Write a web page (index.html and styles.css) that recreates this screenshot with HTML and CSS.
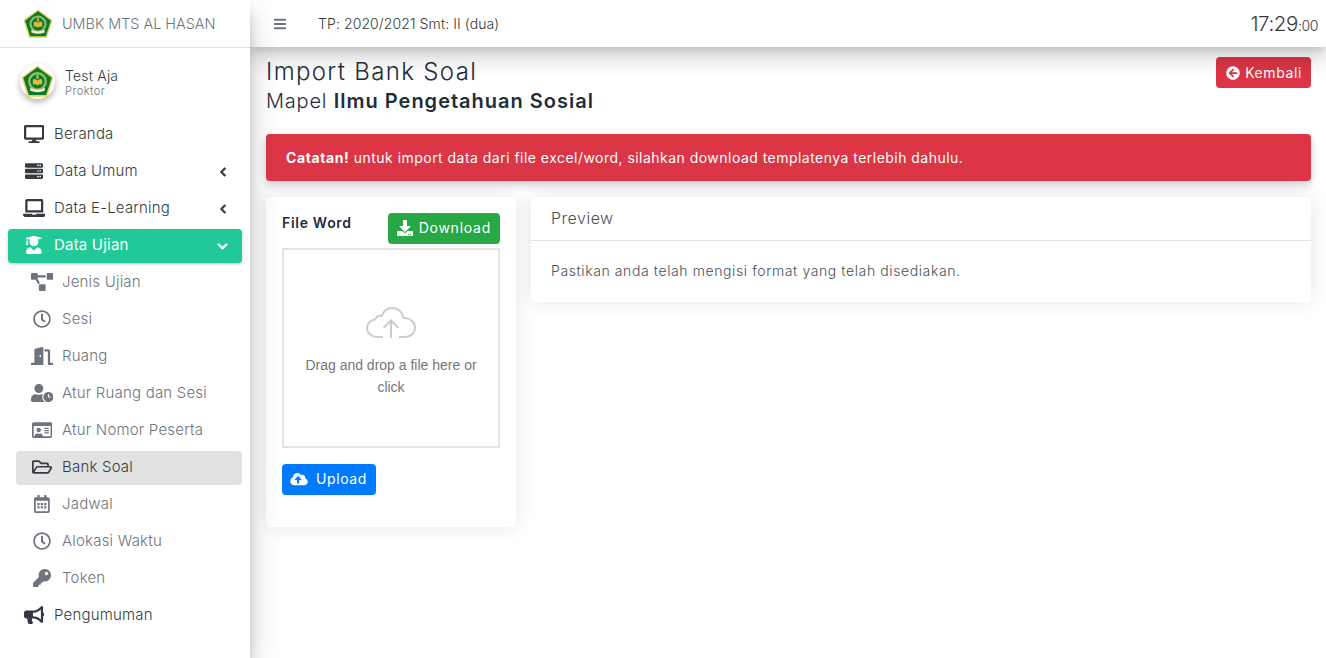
FILE: index.html
```html
<!DOCTYPE html>
<html>
<head>
  <meta charset="utf-8">
  <meta name="viewport" content="width=device-width">
  <title>Import Bank Soal</title>
  <link rel="stylesheet" href="styles.css">
</head>
<body>
  <svg class="defs" width="0" height="0">
    <symbol id="logo" viewBox="0 0 100 100">
      <path d="M50 2L98 37L80 96H20L2 37Z" fill="#e6d35a"/>
      <path d="M50 7L93 39L76 91H24L7 39Z" fill="#0b7a2e"/>
      <circle cx="50" cy="50" r="25" fill="none" stroke="#8fbf6a" stroke-width="7"/>
      <path d="M36 44q8-5 14 3q6-8 14-3v15q-8-3-14 3q-6-6-14-3z" fill="#e2b93b"/>
      <path d="M47 30h6v12h-6z" fill="#e2b93b"/>
      <path d="M28 69q22 12 44 0v9q-22 9-44 0z" fill="#f1eecb"/>
    </symbol>
  </svg>

  <aside class="sidebar">
    <div class="brand">
      <svg class="brand-logo"><use href="#logo"/></svg>
      <span class="brand-text">UMBK MTS AL HASAN</span>
    </div>
    <div class="user-panel">
      <div class="avatar"><svg class="avatar-logo"><use href="#logo"/></svg></div>
      <div class="user-info">
        <div class="user-name">Test Aja</div>
        <div class="user-role">Proktor</div>
      </div>
    </div>
    <nav class="menu">
      <a class="menu-item">
        <span class="icon-box"><svg class="icon" viewBox="0 0 576 512"><path d="M528 0H48C21.5 0 0 21.5 0 48v320c0 26.5 21.5 48 48 48h192l-16 48h-72c-13.3 0-24 10.7-24 24s10.7 24 24 24h272c13.3 0 24-10.7 24-24s-10.7-24-24-24h-72l-16-48h192c26.5 0 48-21.5 48-48V48c0-26.5-21.5-48-48-48zm-16 352H64V64h448v288z"/></svg></span>
        Beranda
      </a>
      <a class="menu-item">
        <span class="icon-box"><svg class="icon" viewBox="0 0 512 512"><path d="M480 160H32c-17.7 0-32-14.3-32-32V64c0-17.7 14.3-32 32-32h448c17.7 0 32 14.3 32 32v64c0 17.7-14.3 32-32 32zm-48-88c-13.3 0-24 10.7-24 24s10.7 24 24 24 24-10.7 24-24-10.7-24-24-24zm-64 0c-13.3 0-24 10.7-24 24s10.7 24 24 24 24-10.7 24-24-10.7-24-24-24zm112 248H32c-17.7 0-32-14.3-32-32v-64c0-17.7 14.3-32 32-32h448c17.7 0 32 14.3 32 32v64c0 17.7-14.3 32-32 32zm-48-88c-13.3 0-24 10.7-24 24s10.7 24 24 24 24-10.7 24-24-10.7-24-24-24zm-64 0c-13.3 0-24 10.7-24 24s10.7 24 24 24 24-10.7 24-24-10.7-24-24-24zm112 248H32c-17.7 0-32-14.3-32-32v-64c0-17.7 14.3-32 32-32h448c17.7 0 32 14.3 32 32v64c0 17.7-14.3 32-32 32zm-48-88c-13.3 0-24 10.7-24 24s10.7 24 24 24 24-10.7 24-24-10.7-24-24-24zm-64 0c-13.3 0-24 10.7-24 24s10.7 24 24 24 24-10.7 24-24-10.7-24-24-24z"/></svg></span>
        Data Umum
        <svg class="arrow" viewBox="0 0 320 512"><path d="M34.52 239.03L228.87 44.69c9.37-9.37 24.57-9.37 33.94 0l22.67 22.67c9.36 9.36 9.37 24.52.04 33.9L131.49 256l154.02 154.75c9.34 9.38 9.32 24.54-.04 33.9l-22.67 22.67c-9.37 9.37-24.57 9.37-33.94 0L34.52 272.97c-9.37-9.37-9.37-24.57 0-33.94z"/></svg>
      </a>
      <a class="menu-item">
        <span class="icon-box"><svg class="icon" viewBox="0 0 640 512"><path d="M624 416H381.54c-.74 19.81-14.71 32-32.74 32H288c-18.69 0-33.02-17.47-32.77-32H16c-8.8 0-16 7.2-16 16v16c0 35.2 28.8 64 64 64h512c35.2 0 64-28.8 64-64v-16c0-8.8-7.2-16-16-16zM576 48c0-26.4-21.6-48-48-48H112C85.6 0 64 21.6 64 48v336h512V48zm-64 272H128V64h384v256z"/></svg></span>
        Data E-Learning
        <svg class="arrow" viewBox="0 0 320 512"><path d="M34.52 239.03L228.87 44.69c9.37-9.37 24.57-9.37 33.94 0l22.67 22.67c9.36 9.36 9.37 24.52.04 33.9L131.49 256l154.02 154.75c9.34 9.38 9.32 24.54-.04 33.9l-22.67 22.67c-9.37 9.37-24.57 9.37-33.94 0L34.52 272.97c-9.37-9.37-9.37-24.57 0-33.94z"/></svg>
      </a>
      <a class="menu-item active">
        <span class="icon-box"><svg class="icon" viewBox="0 0 448 512"><path d="M319.4 320.6L224 416l-95.4-95.4C57.1 323.7 0 382.2 0 454.4v9.6c0 26.5 21.5 48 48 48h352c26.5 0 48-21.5 48-48v-9.6c0-72.2-57.1-130.7-128.6-133.8zM13.6 79.8l6.4 1.5v58.4c-7 4.2-12 11.5-12 20.3 0 8.4 4.6 15.4 11.1 19.7L3.5 242c-1.7 6.9 2.1 14 7.6 14h41.8c5.5 0 9.3-7.1 7.6-14l-15.6-62.3C51.4 175.4 56 168.4 56 160c0-8.8-5-16.1-12-20.3V87.1l66 15.9c-8.6 17.2-14 36.4-14 57 0 70.7 57.3 128 128 128s128-57.3 128-128c0-20.6-5.3-39.8-14-57l96.3-23.2c18.2-4.4 18.2-27.1 0-31.5l-190.4-46c-13-3.1-26.7-3.1-39.7 0L13.6 48.2c-18.1 4.4-18.1 27.2 0 31.6z"/></svg></span>
        Data Ujian
        <svg class="arrow arrow-down" viewBox="0 0 448 512"><path d="M207.029 381.476L12.686 187.132c-9.373-9.373-9.373-24.569 0-33.941l22.667-22.667c9.357-9.357 24.522-9.375 33.901-.04L224 284.505l154.745-154.021c9.379-9.335 24.544-9.317 33.901.04l22.667 22.667c9.373 9.373 9.373 24.569 0 33.941L240.971 381.476c-9.373 9.372-24.569 9.372-33.942 0z"/></svg>
      </a>
      <a class="menu-item sub">
        <span class="icon-box"><svg class="icon" viewBox="0 0 640 512"><path d="M384 320H256c-17.67 0-32 14.33-32 32v128c0 17.67 14.33 32 32 32h128c17.67 0 32-14.33 32-32V352c0-17.67-14.33-32-32-32zM192 32c0-17.67-14.33-32-32-32H32C14.33 0 0 14.33 0 32v128c0 17.67 14.33 32 32 32h95.72l73.16 128.04C211.98 300.98 232.4 288 256 288h.28L192 175.51V128h224V64H192V32zM608 0H480c-17.67 0-32 14.33-32 32v128c0 17.67 14.33 32 32 32h128c17.67 0 32-14.33 32-32V32c0-17.67-14.33-32-32-32z"/></svg></span>
        Jenis Ujian
      </a>
      <a class="menu-item sub">
        <span class="icon-box"><svg class="icon" viewBox="0 0 512 512"><path d="M256 8C119 8 8 119 8 256s111 248 248 248 248-111 248-248S393 8 256 8zm0 448c-110.5 0-200-89.5-200-200S145.5 56 256 56s200 89.5 200 200-89.5 200-200 200zm61.8-104.4l-84.9-61.7c-3.1-2.3-4.9-5.9-4.9-9.7V116c0-6.6 5.4-12 12-12h32c6.6 0 12 5.4 12 12v141.7l66.8 48.6c5.4 3.9 6.5 11.4 2.6 16.8L334.6 349c-3.9 5.3-11.4 6.5-16.8 2.6z"/></svg></span>
        Sesi
      </a>
      <a class="menu-item sub">
        <span class="icon-box"><svg class="icon" viewBox="0 0 640 512"><path d="M624 448h-80V113.45C544 86.19 522.47 64 496 64H384v64h96v384h144c8.84 0 16-7.16 16-16v-32c0-8.84-7.16-16-16-16zM312.24 1.01l-192 49.74C105.99 54.44 96 67.7 96 82.92V448H16c-8.84 0-16 7.16-16 16v32c0 8.84 7.16 16 16 16h336V33.18c0-21.58-19.56-37.41-39.76-32.17zM264 288c-13.25 0-24-14.33-24-32s10.75-32 24-32 24 14.33 24 32-10.75 32-24 32z"/></svg></span>
        Ruang
      </a>
      <a class="menu-item sub">
        <span class="icon-box"><svg class="icon" viewBox="0 0 640 512"><path d="M496 224c-79.6 0-144 64.4-144 144s64.4 144 144 144 144-64.4 144-144-64.4-144-144-144zm64 150.3c0 5.3-4.4 9.7-9.7 9.7h-60.6c-5.3 0-9.7-4.4-9.7-9.7v-76.6c0-5.3 4.4-9.7 9.7-9.7h12.6c5.3 0 9.7 4.4 9.7 9.7V352h38.3c5.3 0 9.7 4.4 9.7 9.7v12.6zM320 368c0-27.8 6.7-54.1 18.2-77.5-8-1.5-16.2-2.5-24.6-2.5h-16.7c-22.2 10.2-46.9 16-72.9 16s-50.6-5.8-72.9-16h-16.7C60.2 288 0 348.2 0 422.4V464c0 26.5 21.5 48 48 48h347.1c-45.3-31.9-75.1-84.5-75.1-144zm-96-112c70.7 0 128-57.3 128-128S294.7 0 224 0 96 57.3 96 128s57.3 128 128 128z"/></svg></span>
        Atur Ruang dan Sesi
      </a>
      <a class="menu-item sub">
        <span class="icon-box"><svg class="icon" viewBox="0 0 576 512"><path d="M528 32H48C21.5 32 0 53.5 0 80v352c0 26.5 21.5 48 48 48h480c26.5 0 48-21.5 48-48V80c0-26.5-21.5-48-48-48zm0 400H303.2c.9-4.5.8 3.6.8-22.4 0-31.8-30.1-57.6-67.2-57.6-10.8 0-18.7 8-44.8 8-26.9 0-33.4-8-44.8-8-37.1 0-67.2 25.8-67.2 57.6 0 26-.2 17.9.8 22.4H48V144h480v288zm-168-80h112c4.4 0 8-3.6 8-8v-16c0-4.4-3.6-8-8-8H360c-4.4 0-8 3.6-8 8v16c0 4.4 3.6 8 8 8zm0-64h112c4.4 0 8-3.6 8-8v-16c0-4.4-3.6-8-8-8H360c-4.4 0-8 3.6-8 8v16c0 4.4 3.6 8 8 8zm0-64h112c4.4 0 8-3.6 8-8v-16c0-4.4-3.6-8-8-8H360c-4.4 0-8 3.6-8 8v16c0 4.4 3.6 8 8 8zm-168 96c35.3 0 64-28.7 64-64s-28.7-64-64-64-64 28.7-64 64 28.7 64 64 64z"/></svg></span>
        Atur Nomor Peserta
      </a>
      <a class="menu-item sub current">
        <span class="icon-box"><svg class="icon" viewBox="0 0 576 512"><path d="M527.9 224H480v-48c0-26.5-21.5-48-48-48H272l-64-64H48C21.5 64 0 85.5 0 112v288c0 26.5 21.5 48 48 48h400c16.5 0 31.9-8.5 40.7-22.6l79.9-128c20-31.9-3-73.4-40.7-73.4zM48 118c0-3.3 2.7-6 6-6h134.1l64 64H426c3.3 0 6 2.7 6 6v42H152c-16.8 0-32.4 8.8-41.1 23.2L48 351.4zm400 282H72l77.2-128H528z"/></svg></span>
        Bank Soal
      </a>
      <a class="menu-item sub">
        <span class="icon-box"><svg class="icon" viewBox="0 0 448 512"><path d="M148 288h-40c-6.6 0-12-5.4-12-12v-40c0-6.6 5.4-12 12-12h40c6.6 0 12 5.4 12 12v40c0 6.6-5.4 12-12 12zm108-12v-40c0-6.6-5.4-12-12-12h-40c-6.6 0-12 5.4-12 12v40c0 6.6 5.4 12 12 12h40c6.6 0 12-5.4 12-12zm96 0v-40c0-6.6-5.4-12-12-12h-40c-6.6 0-12 5.4-12 12v40c0 6.6 5.4 12 12 12h40c6.6 0 12-5.4 12-12zm-96 96v-40c0-6.6-5.4-12-12-12h-40c-6.6 0-12 5.4-12 12v40c0 6.6 5.4 12 12 12h40c6.6 0 12-5.4 12-12zm-96 0v-40c0-6.6-5.4-12-12-12h-40c-6.6 0-12 5.4-12 12v40c0 6.6 5.4 12 12 12h40c6.6 0 12-5.4 12-12zm192 0v-40c0-6.6-5.4-12-12-12h-40c-6.6 0-12 5.4-12 12v40c0 6.6 5.4 12 12 12h40c6.6 0 12-5.4 12-12zm96-260v352c0 26.5-21.5 48-48 48H48c-26.5 0-48-21.5-48-48V112c0-26.5 21.5-48 48-48h48V12c0-6.6 5.4-12 12-12h40c6.6 0 12 5.4 12 12v52h128V12c0-6.6 5.4-12 12-12h40c6.6 0 12 5.4 12 12v52h48c26.5 0 48 21.5 48 48zm-48 346V160H48v298c0 3.3 2.7 6 6 6h340c3.3 0 6-2.7 6-6z"/></svg></span>
        Jadwal
      </a>
      <a class="menu-item sub">
        <span class="icon-box"><svg class="icon" viewBox="0 0 512 512"><path d="M256 8C119 8 8 119 8 256s111 248 248 248 248-111 248-248S393 8 256 8zm0 448c-110.5 0-200-89.5-200-200S145.5 56 256 56s200 89.5 200 200-89.5 200-200 200zm61.8-104.4l-84.9-61.7c-3.1-2.3-4.9-5.9-4.9-9.7V116c0-6.6 5.4-12 12-12h32c6.6 0 12 5.4 12 12v141.7l66.8 48.6c5.4 3.9 6.5 11.4 2.6 16.8L334.6 349c-3.9 5.3-11.4 6.5-16.8 2.6z"/></svg></span>
        Alokasi Waktu
      </a>
      <a class="menu-item sub">
        <span class="icon-box"><svg class="icon" viewBox="0 0 512 512"><path d="M512 176c0 97.2-78.8 176-176 176-11.2 0-22.2-1.1-32.8-3.1l-24 27A24 24 0 0 1 261.2 384H224v40c0 13.3-10.7 24-24 24h-40v40c0 13.3-10.7 24-24 24H24c-13.3 0-24-10.7-24-24v-78.1c0-6.4 2.5-12.5 7-17l161.8-161.8C163.1 213.8 160 195.3 160 176 160 78.8 238.8 0 336 0c97.5 0 176 78.5 176 176zM336 128c0 26.5 21.5 48 48 48s48-21.5 48-48-21.5-48-48-48-48 21.5-48 48z"/></svg></span>
        Token
      </a>
      <a class="menu-item">
        <span class="icon-box"><svg class="icon" viewBox="0 0 576 512"><path d="M576 240c0-23.63-12.95-44.04-32-55.12V32.01C544 23.26 537.02 0 512 0c-7.12 0-14.19 2.38-19.98 7.02l-85.03 68.03C364.28 109.19 310.66 128 256 128H64c-35.35 0-64 28.65-64 64v96c0 35.35 28.65 64 64 64h33.7c-1.39 10.48-2.18 21.14-2.18 32 0 39.77 9.26 77.35 25.56 110.94 5.19 10.69 16.52 17.06 28.4 17.06h74.28c26.05 0 41.69-29.84 25.9-50.56-16.4-21.52-26.15-48.36-26.15-77.44 0-11.11 1.62-21.79 4.41-32H256c54.66 0 108.28 18.81 150.98 52.95l85.03 68.03a32.023 32.023 0 0 0 19.98 7.02c24.92 0 32-22.78 32-32V295.13C563.05 284.04 576 263.63 576 240zm-96 141.42l-33.05-26.44C392.95 311.78 325.12 288 256 288v-96c69.12 0 136.95-23.78 190.95-66.98L480 98.58v282.84z"/></svg></span>
        Pengumuman
      </a>
    </nav>
  </aside>

  <div class="page">
    <header class="topbar">
      <svg class="bars" viewBox="0 0 448 512"><path d="M16 132h416c8.8 0 16-7.2 16-16V76c0-8.8-7.2-16-16-16H16C7.2 60 0 67.2 0 76v40c0 8.8 7.2 16 16 16zm0 160h416c8.8 0 16-7.2 16-16v-40c0-8.8-7.2-16-16-16H16c-8.8 0-16 7.2-16 16v40c0 8.8 7.2 16 16 16zm0 160h416c8.8 0 16-7.2 16-16v-40c0-8.8-7.2-16-16-16H16c-8.8 0-16 7.2-16 16v40c0 8.8 7.2 16 16 16z"/></svg>
      <span class="period">TP: 2020/2021 Smt: II (dua)</span>
      <span class="clock">17:29<small>:00</small></span>
    </header>

    <main class="content">
      <div class="title-row">
        <div>
          <h1 class="title">Import Bank Soal</h1>
          <h2 class="subtitle">Mapel <b>Ilmu Pengetahuan Sosial</b></h2>
        </div>
        <a class="btn btn-red">
          <svg class="btn-icon" viewBox="0 0 512 512"><path d="M256 504C119 504 8 393 8 256S119 8 256 8s248 111 248 248-111 248-248 248zm28.9-143.6L209.4 288H392c13.3 0 24-10.7 24-24v-16c0-13.3-10.7-24-24-24H209.4l75.5-72.4c9.7-9.3 9.9-24.8.4-34.3l-11-10.9c-9.4-9.4-24.6-9.4-33.9 0L107.7 239c-9.4 9.4-9.4 24.6 0 33.9l132.7 132.7c9.4 9.4 24.6 9.4 33.9 0l11-10.9c9.5-9.5 9.3-25-.4-34.3z"/></svg>
          Kembali
        </a>
      </div>

      <div class="alert"><b>Catatan!</b> untuk import data dari file excel/word, silahkan download templatenya terlebih dahulu.</div>

      <div class="cards">
        <section class="card upload-card">
          <div class="upload-head">
            <span class="upload-label">File Word</span>
            <a class="btn btn-green">
              <svg class="btn-icon" viewBox="0 0 512 512"><path d="M216 0h80c13.3 0 24 10.7 24 24v168h87.7c17.8 0 26.7 21.5 14.1 34.1L269.7 378.3c-7.5 7.5-19.8 7.5-27.3 0L90.1 226.1c-12.6-12.6-3.7-34.1 14.1-34.1H192V24c0-13.3 10.7-24 24-24zm296 376v112c0 13.3-10.7 24-24 24H24c-13.3 0-24-10.7-24-24V376c0-13.3 10.7-24 24-24h146.7l49 49c20.1 20.1 52.5 20.1 72.6 0l49-49H488c13.3 0 24 10.7 24 24zm-124 88c0-11-9-20-20-20s-20 9-20 20 9 20 20 20 20-9 20-20zm64 0c0-11-9-20-20-20s-20 9-20 20 9 20 20 20 20-9 20-20z"/></svg>
              Download
            </a>
          </div>
          <div class="dropzone">
            <svg class="cloud" viewBox="0 0 50 32"><path d="M17 30H11C5.5 30 1 26.2 1 21.2C1 16.6 4.6 13 9 12.6C10.4 9.8 13 8.4 15.6 8.8C17.8 4 21.5 1 26 1C32 1 36.6 5.2 37.6 11C43.6 10.6 49 14.8 49 20.6C49 25.8 44.8 30 39.6 30H33" fill="none" stroke="#ccc" stroke-width="2"/><path d="M25 31V14M17.5 21L25 13.5L32.5 21" fill="none" stroke="#ccc" stroke-width="2"/></svg>
            <p class="drop-text">Drag and drop a file here or click</p>
          </div>
          <a class="btn btn-blue">
            <svg class="btn-icon upload-icon" viewBox="0 0 640 512"><path d="M537.6 226.6c4.1-10.7 6.4-22.4 6.4-34.6 0-53-43-96-96-96-19.7 0-38.1 6-53.3 16.2C367 64.2 315.3 32 256 32c-88.4 0-160 71.6-160 160 0 2.7.1 5.4.2 8.1C40.2 219.8 0 273.2 0 336c0 79.5 64.5 144 144 144h368c70.7 0 128-57.3 128-128 0-61.9-44-113.6-102.4-125.4zM393.4 288H328v112c0 8.8-7.2 16-16 16h-48c-8.8 0-16-7.2-16-16V288h-65.4c-14.3 0-21.4-17.2-11.3-27.3l105.4-105.4c6.2-6.2 16.4-6.2 22.6 0l105.4 105.4c10.1 10.1 2.9 27.3-11.3 27.3z"/></svg>
            Upload
          </a>
        </section>

        <section class="card preview-card">
          <div class="preview-head">Preview</div>
          <div class="preview-body">Pastikan anda telah mengisi format yang telah disediakan.</div>
        </section>
      </div>
    </main>
  </div>
</body>
</html>
```

FILE: styles.css
```css
* {
  box-sizing: border-box;
}

html, body {
  height: 100%;
}

body {
  margin: 0;
  display: flex;
  overflow: hidden;
  font-family: Inter, "Noto Sans", "Liberation Sans", sans-serif;
  font-size: 14px;
  font-weight: 300;
  color: #1f2d3d;
  background: #fff;
}

.defs {
  position: absolute;
}

/* sidebar */
.sidebar {
  width: 250px;
  flex: none;
  background: #fff;
  box-shadow: 0 14px 28px rgba(0, 0, 0, 0.2), 0 10px 10px rgba(0, 0, 0, 0.12);
  position: relative;
  z-index: 2;
}

.brand {
  height: 48px;
  padding-left: 23px;
  display: flex;
  align-items: center;
  gap: 9px;
  border-bottom: 1px solid #dee2e6;
}

.brand-logo {
  width: 30px;
  height: 30px;
}

.brand-text {
  font-size: 14.4px;
  color: #6c757d;
}

.user-panel {
  display: flex;
  align-items: center;
  gap: 10px;
  padding-left: 20px;
  height: 66px;
}

.avatar {
  width: 35px;
  height: 35px;
  border-radius: 50%;
  background: #fff;
  box-shadow: 0 3px 6px rgba(0, 0, 0, 0.3);
  display: flex;
  align-items: center;
  justify-content: center;
}

.avatar-logo {
  width: 33px;
  height: 33px;
}

.user-info {
  margin-top: 1px;
}

.user-name {
  font-size: 14px;
  line-height: 18px;
  letter-spacing: 0.2px;
  color: #343a40;
}

.user-role {
  font-size: 11px;
  line-height: 12px;
  letter-spacing: 0.5px;
  color: #6c757d;
}

.menu {
  padding: 4px 8px 0;
  display: flex;
  flex-direction: column;
  gap: 3px;
}

.menu-item {
  height: 34px;
  display: flex;
  align-items: center;
  padding: 0 0 3px 16px;
  border-radius: 4px;
  font-size: 15px;
  letter-spacing: 0.2px;
  color: #343a40;
  fill: #343a40;
}

.menu-item.sub {
  margin-left: 8px;
  color: #6c757d;
  fill: #6c757d;
}

.menu-item.active {
  background: #20c997;
  color: #fff;
  fill: #fff;
  box-shadow: 0 1px 3px rgba(0, 0, 0, 0.24);
  font-weight: 400;
}

.menu-item.current {
  background: #e2e2e2;
  color: #343a40;
  fill: #343a40;
}

.icon-box {
  width: 22px;
  margin: 0 9px 0 -1px;
  display: flex;
  justify-content: center;
  flex: none;
}

.icon {
  height: 18px;
  width: auto;
  flex: none;
}

.arrow {
  height: 10px;
  width: 8px;
  margin: 3px 15px 0 auto;
  stroke: currentColor;
  stroke-width: 40px;
}

.arrow-down {
  height: 11px;
  width: 11px;
  margin-right: 14px;
}

/* top bar */
.page {
  flex: 1;
  min-width: 0;
}

.topbar {
  height: 47px;
  display: flex;
  align-items: center;
  padding: 0 8px 0 24px;
  background: #fff;
  box-shadow: 0 14px 20px rgba(0, 0, 0, 0.14), 0 4px 8px rgba(0, 0, 0, 0.12);
  position: relative;
  z-index: 1;
}

.bars {
  width: 12px;
  height: 14px;
  fill: #6c757d;
}

.period {
  margin-left: 32px;
  font-size: 14px;
  letter-spacing: 0.1px;
  color: #343a40;
}

.clock {
  margin-left: auto;
  font-size: 20.5px;
  letter-spacing: -0.4px;
  color: #343a40;
}

.clock small {
  font-size: 14px;
}

/* content */
.content {
  padding: 9px 15px 0 16px;
}

.title-row {
  display: flex;
  justify-content: space-between;
  align-items: flex-start;
  height: 78px;
}

.title {
  margin: 0;
  font-size: 24px;
  line-height: 32px;
  font-weight: 300;
  letter-spacing: 1.35px;
}

.subtitle {
  margin: 0;
  font-size: 20px;
  line-height: 26px;
  font-weight: 300;
  letter-spacing: 0.8px;
}

.subtitle b {
  font-weight: 600;
  letter-spacing: 1px;
}

.btn {
  display: inline-flex;
  align-items: center;
  gap: 5px;
  height: 31px;
  padding: 0 10px;
  border-radius: 4px;
  color: #fff;
  fill: #fff;
  font-size: 14px;
  font-weight: 400;
  letter-spacing: 0.6px;
}

.btn-icon {
  width: 14px;
  height: 14px;
}

.btn-red {
  margin-top: 1px;
  background: #dc3545;
  padding: 0 9px 0 10px;
}

.btn-green {
  background: #28a745;
  padding: 0 9px 2px;
  gap: 6px;
  letter-spacing: 0.75px;
}

.btn-green .btn-icon {
  width: 16px;
  height: 16px;
}

.btn-blue {
  background: #007bff;
  padding: 0 9px 2px 8px;
  gap: 8px;
}

.upload-icon {
  width: 18px;
}

.alert {
  height: 47px;
  padding: 0 20px;
  line-height: 47px;
  border-radius: 4px;
  background: #dc3545;
  color: #fff;
  font-size: 14px;
  font-weight: 400;
  letter-spacing: 0.47px;
  box-shadow: 0 4px 8px rgba(0, 0, 0, 0.2);
}

.alert b {
  font-weight: 700;
  letter-spacing: 0.6px;
}

.cards {
  display: flex;
  align-items: flex-start;
  gap: 15px;
  margin-top: 16px;
}

.card {
  background: #fff;
  border-radius: 4px;
  box-shadow: 0 0 20px rgba(0, 0, 0, 0.1);
}

.upload-card {
  width: 250px;
  height: 330px;
  padding: 16px;
}

.upload-head {
  display: flex;
  justify-content: space-between;
  align-items: flex-start;
  height: 35px;
}

.upload-label {
  margin-top: 1px;
  font-size: 14px;
  font-weight: 600;
  letter-spacing: 0.7px;
}

.dropzone {
  height: 200px;
  margin-bottom: 16px;
  padding: 57px 15px 0;
  border: 2px solid #e5e5e5;
  text-align: center;
}

.cloud {
  display: block;
  width: 50px;
  height: 32px;
  margin: 0 auto 15px;
}

.drop-text {
  margin: 0;
  font-family: "Liberation Sans", Arial, sans-serif;
  font-size: 14px;
  font-weight: 400;
  line-height: 22px;
  color: #777;
}

.preview-card {
  flex: 1;
}

.preview-head {
  height: 44px;
  padding: 0 20px 2px;
  display: flex;
  align-items: center;
  font-size: 16px;
  letter-spacing: 0.5px;
  color: #495057;
  border-bottom: 1px solid #dee2e6;
}

.preview-body {
  height: 61px;
  padding: 21px 20px 0;
  font-size: 14px;
  letter-spacing: 0.6px;
  color: #495057;
}
```
